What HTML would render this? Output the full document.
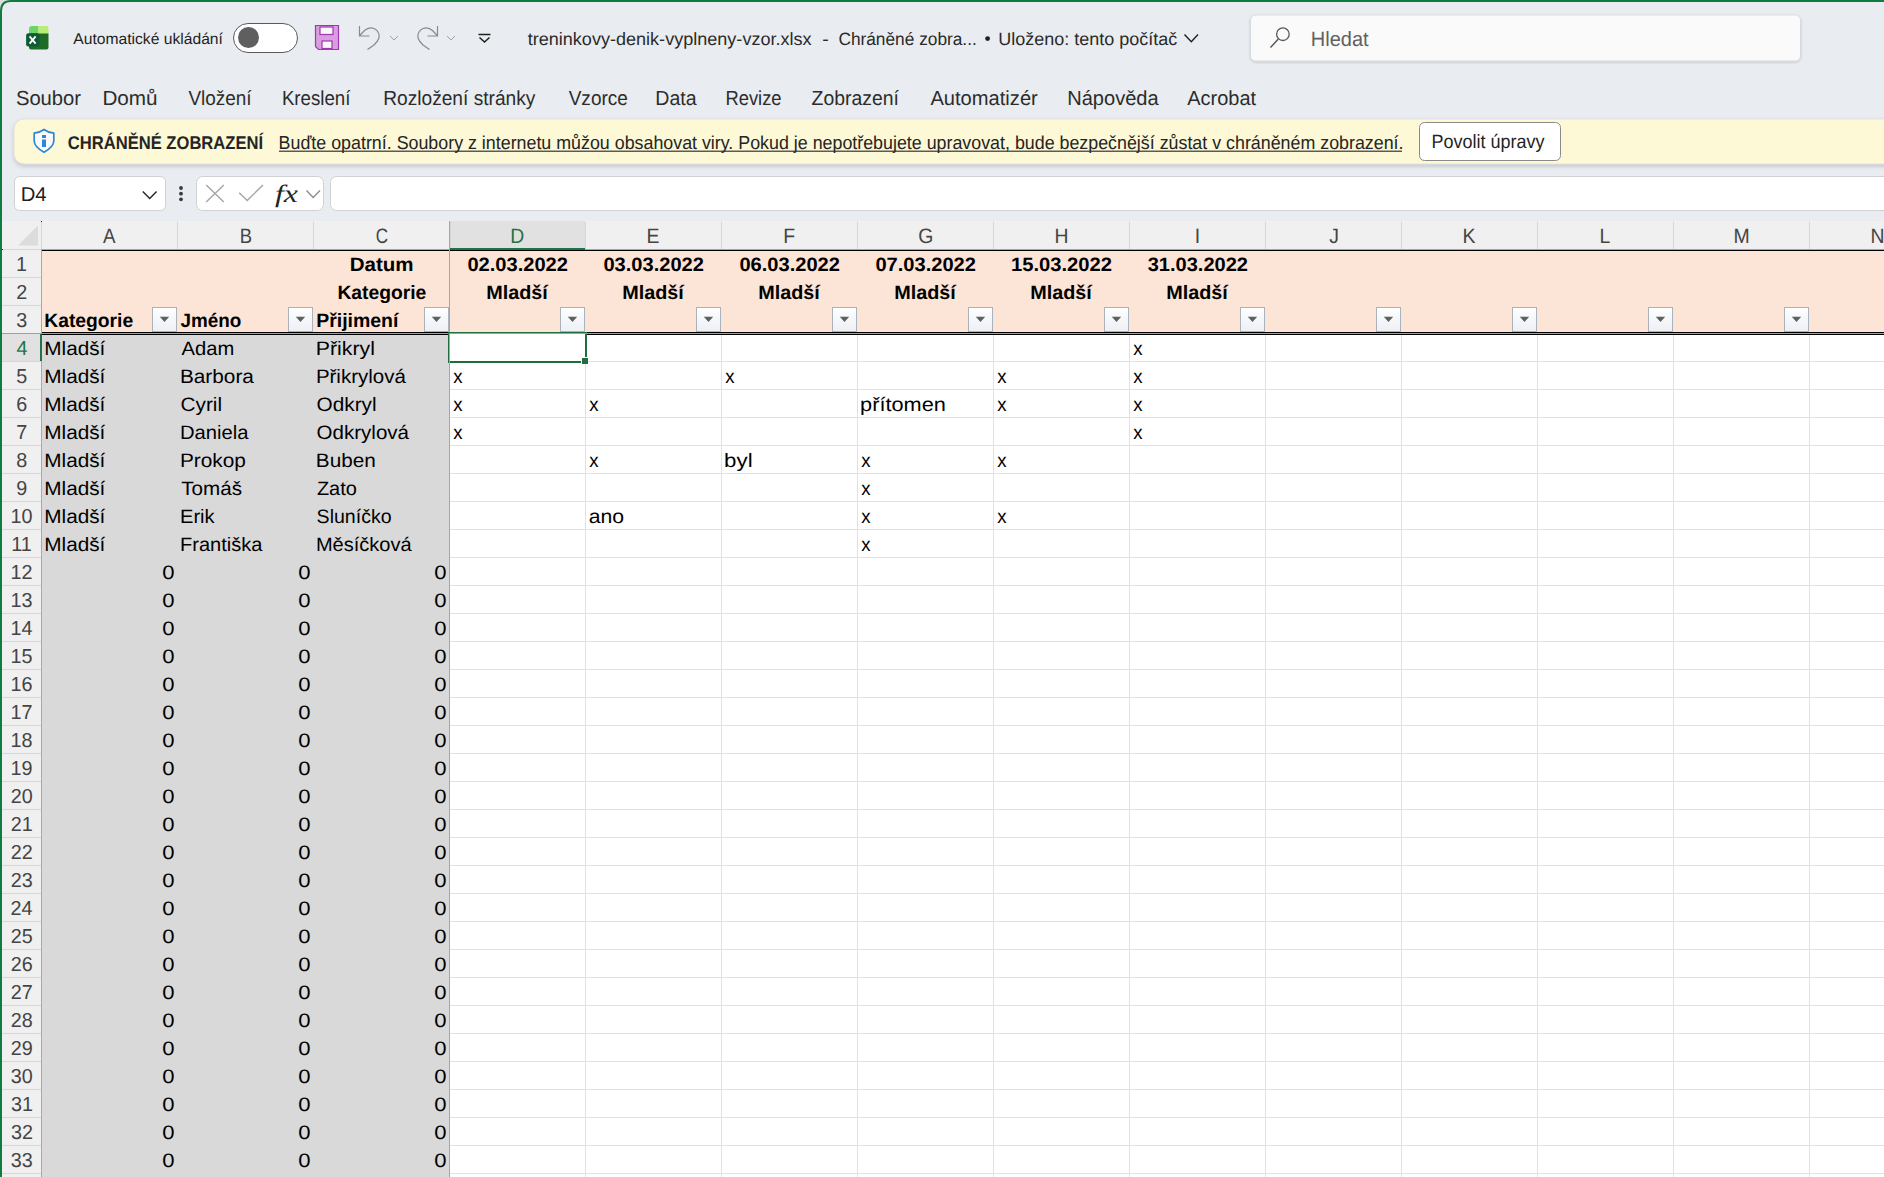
<!DOCTYPE html>
<html><head><meta charset="utf-8"><title>Excel</title>
<style>html,body{margin:0;padding:0;overflow:hidden;background:#e9edf1}svg{display:block}text{font-family:"Liberation Sans", sans-serif}</style>
</head><body>
<svg width="1884" height="1177" viewBox="0 0 1884 1177" text-rendering="geometricPrecision">
<defs><filter id="sh" x="-5%" y="-30%" width="110%" height="160%"><feDropShadow dx="0" dy="2" stdDeviation="2" flood-color="#000" flood-opacity="0.18"/></filter><filter id="sh2" x="-5%" y="-30%" width="110%" height="160%"><feDropShadow dx="0" dy="1" stdDeviation="1" flood-color="#000" flood-opacity="0.18"/></filter><linearGradient id="btn" x1="0" y1="0" x2="0" y2="1"><stop offset="0" stop-color="#ffffff"/><stop offset="0.5" stop-color="#f5f7fa"/><stop offset="1" stop-color="#edf0f4"/></linearGradient></defs>
<rect x="0" y="0" width="1884" height="1177" fill="#e9edf1"/>
<path d="M0,0 L13,0 Q0,0 0,13 Z" fill="#dcdcdc"/>
<path d="M1,1177 L1,11 Q1,1 11,1 L1884,1" fill="none" stroke="#107c41" stroke-width="2"/>
<g><path d="M29,29 Q29,26 32,26 L38.5,26 L38.5,34 L29,34 Z" fill="#6fd466"/><path d="M38.3,26 L46.5,26 Q48.5,26 48.5,28 L48.5,34 L38.3,34 Z" fill="#bdec74"/><path d="M29,33.5 L48.5,33.5 L48.5,47.5 Q48.5,49.6 46.5,49.6 L31,49.6 Q29,49.6 29,47.5 Z" fill="#1f6b26"/><rect x="26.1" y="33.3" width="13.5" height="13.2" rx="2.2" fill="#0e5a35"/><path d="M29.6,36.4 L35.6,43.6 M35.6,36.4 L29.6,43.6" stroke="#fff" stroke-width="1.9"/></g>
<text x="73.3" y="43.8" font-size="15.5" fill="#1f1f1f" font-weight="normal" textLength="149.6" lengthAdjust="spacingAndGlyphs">Automatické ukládání</text>
<rect x="233.5" y="23.5" width="64" height="29" rx="14.5" fill="#fff" stroke="#5a5a5a" stroke-width="1"/>
<circle cx="248.5" cy="37.5" r="10.5" fill="#5f5f5f"/>
<path d="M315.5,25.5 L338.5,25.5 L338.5,49.5 L318.5,49.5 L315.5,46.5 Z" fill="#d89ee0" stroke="#a335b3" stroke-width="1.2"/>
<rect x="320" y="27" width="13" height="7.5" fill="#f7f7f7" stroke="#a335b3" stroke-width="1.2"/>
<rect x="322" y="41" width="10" height="7.5" fill="#f7f7f7" stroke="#a335b3" stroke-width="1.2"/>
<path d="M359.5,26 L359.5,36 L369.5,36 M359.8,35.5 L364.5,30.5 Q369,26.5 374,28.5 Q380,31.5 379,38 Q378,41 374,45 L367.5,49.5" fill="none" stroke="#8a8a8a" stroke-width="1.2"/>
<path d="M390,36 L394,40 L398,36" fill="none" stroke="#a0a0a0" stroke-width="1"/>
<path d="M437.5,26 L437.5,36 L427.5,36 M437.2,35.5 L432.5,30.5 Q428,26.5 423,28.5 Q417,31.5 418,38 Q419,41 423,45 L429.5,49.5" fill="none" stroke="#8a8a8a" stroke-width="1.2"/>
<path d="M447,36 L451,40 L455,36" fill="none" stroke="#a0a0a0" stroke-width="1"/>
<path d="M478.5,34.5 L490.5,34.5" stroke="#1f1f1f" stroke-width="1.5"/>
<path d="M479.5,37.5 L484.5,42 L489.5,37.5" fill="none" stroke="#1f1f1f" stroke-width="1.5"/>
<text x="527.7" y="44.6" font-size="17.8" fill="#2a2a2a" font-weight="normal" textLength="283.9" lengthAdjust="spacingAndGlyphs">treninkovy-denik-vyplneny-vzor.xlsx</text>
<text x="822.3" y="44.6" font-size="17.8" fill="#2a2a2a" font-weight="normal" textLength="6.5" lengthAdjust="spacingAndGlyphs">-</text>
<text x="838.4" y="44.6" font-size="17.8" fill="#2a2a2a" font-weight="normal" textLength="138.4" lengthAdjust="spacingAndGlyphs">Chráněné zobra...</text>
<circle cx="987.6" cy="38.6" r="2.4" fill="#1f1f1f"/>
<text x="998.2" y="44.6" font-size="17.8" fill="#2a2a2a" font-weight="normal" textLength="179.1" lengthAdjust="spacingAndGlyphs">Uloženo: tento počítač</text>
<path d="M1184.5,34.5 L1191.3,41.8 L1198,34.5" fill="none" stroke="#1f1f1f" stroke-width="1.4"/>
<rect x="1250.5" y="15" width="550" height="46" rx="5" fill="#fafafa" stroke="#d8dbdf" stroke-width="1" filter="url(#sh2)"/>
<circle cx="1282.9" cy="34.2" r="6.3" fill="none" stroke="#585858" stroke-width="1.3"/>
<path d="M1278.3,39.1 L1270.5,47.5" stroke="#585858" stroke-width="1.5"/>
<text x="1310.8" y="45.9" font-size="20.7" fill="#616161" font-weight="normal" textLength="57.8" lengthAdjust="spacingAndGlyphs">Hledat</text>
<text x="15.9" y="104.9" font-size="20.3" fill="#2c2c2c" font-weight="normal" textLength="65.2" lengthAdjust="spacingAndGlyphs">Soubor</text>
<text x="102.4" y="104.9" font-size="20.3" fill="#2c2c2c" font-weight="normal" textLength="55.2" lengthAdjust="spacingAndGlyphs">Domů</text>
<text x="188.4" y="104.9" font-size="20.3" fill="#2c2c2c" font-weight="normal" textLength="63.2" lengthAdjust="spacingAndGlyphs">Vložení</text>
<text x="281.9" y="104.9" font-size="20.3" fill="#2c2c2c" font-weight="normal" textLength="68.5" lengthAdjust="spacingAndGlyphs">Kreslení</text>
<text x="383.2" y="104.9" font-size="20.3" fill="#2c2c2c" font-weight="normal" textLength="152.2" lengthAdjust="spacingAndGlyphs">Rozložení stránky</text>
<text x="568.7" y="104.9" font-size="20.3" fill="#2c2c2c" font-weight="normal" textLength="59.2" lengthAdjust="spacingAndGlyphs">Vzorce</text>
<text x="655.3" y="104.9" font-size="20.3" fill="#2c2c2c" font-weight="normal" textLength="41.3" lengthAdjust="spacingAndGlyphs">Data</text>
<text x="725.5" y="104.9" font-size="20.3" fill="#2c2c2c" font-weight="normal" textLength="56.0" lengthAdjust="spacingAndGlyphs">Revize</text>
<text x="811.6" y="104.9" font-size="20.3" fill="#2c2c2c" font-weight="normal" textLength="87.3" lengthAdjust="spacingAndGlyphs">Zobrazení</text>
<text x="930.4" y="104.9" font-size="20.3" fill="#2c2c2c" font-weight="normal" textLength="107.4" lengthAdjust="spacingAndGlyphs">Automatizér</text>
<text x="1067.2" y="104.9" font-size="20.3" fill="#2c2c2c" font-weight="normal" textLength="91.5" lengthAdjust="spacingAndGlyphs">Nápověda</text>
<text x="1187.3" y="104.9" font-size="20.3" fill="#2c2c2c" font-weight="normal" textLength="68.8" lengthAdjust="spacingAndGlyphs">Acrobat</text>
<rect x="14" y="119" width="1900" height="45" rx="10" fill="#fdf8d5" stroke="#d3d6da" stroke-width="0.6" filter="url(#sh)"/>
<path d="M44,129.5 Q39.5,132.8 34.2,133.2 L34.2,141 Q34.5,147 44,152.3 Q53.5,147 53.8,141 L53.8,133.2 Q48.5,132.8 44,129.5 Z" fill="#fafafa" stroke="#2b88d8" stroke-width="1.7"/>
<rect x="42" y="135" width="4" height="3" fill="#2b88d8"/>
<rect x="42" y="139.5" width="4" height="7.5" fill="#2b88d8"/>
<text x="67.8" y="149.0" font-size="18.4" fill="#242424" font-weight="bold" textLength="195.3" lengthAdjust="spacingAndGlyphs">CHRÁNĚNÉ ZOBRAZENÍ</text>
<text x="278.6" y="148.6" font-size="18.8" fill="#242424" font-weight="normal" textLength="1124.9" lengthAdjust="spacingAndGlyphs">Buďte opatrní. Soubory z internetu můžou obsahovat viry. Pokud je nepotřebujete upravovat, bude bezpečnější zůstat v chráněném zobrazení.</text>
<rect x="279" y="150.6" width="1123" height="1.2" fill="#333"/>
<rect x="1419.5" y="122.5" width="141" height="38" rx="5" fill="#fff" stroke="#8a8a8a" stroke-width="1"/>
<text x="1431.6" y="148.1" font-size="19.3" fill="#242424" font-weight="normal" textLength="113.0" lengthAdjust="spacingAndGlyphs">Povolit úpravy</text>
<rect x="14.5" y="176.5" width="151" height="34" rx="5" fill="#fff" stroke="#d1d1d1" stroke-width="1"/>
<text x="20.7" y="201.0" font-size="20.0" fill="#1f1f1f" font-weight="normal" textLength="25.9" lengthAdjust="spacingAndGlyphs">D4</text>
<path d="M142.8,191.5 L149.7,198.5 L156.6,191.5" fill="none" stroke="#242424" stroke-width="1.4"/>
<circle cx="181" cy="188" r="1.9" fill="#3a3a3a"/>
<circle cx="181" cy="193.7" r="1.9" fill="#3a3a3a"/>
<circle cx="181" cy="199.3" r="1.9" fill="#3a3a3a"/>
<rect x="196.5" y="176.5" width="127" height="34" rx="6" fill="#fff" stroke="#d1d1d1" stroke-width="1"/>
<path d="M206.2,185 L223.8,202 M223.8,185 L206.2,202" stroke="#a5a5a5" stroke-width="1.4"/>
<path d="M239.2,192.8 L247.2,200.5 L263,185" fill="none" stroke="#a5a5a5" stroke-width="1.4"/>
<text x="275" y="201.5" style="font-family:'Liberation Serif', serif;font-style:italic" font-size="25" fill="#242424" textLength="23" lengthAdjust="spacingAndGlyphs">fx</text>
<path d="M306.5,190.5 L313.2,197.5 L320,190.5" fill="none" stroke="#8a8a8a" stroke-width="1.3"/>
<rect x="330.5" y="176.5" width="1600" height="34" rx="6" fill="#fff" stroke="#d1d1d1" stroke-width="1"/>
<rect x="2" y="221" width="1882" height="956" fill="#ffffff"/>
<rect x="2" y="221" width="1882" height="28" fill="#f0f0f0"/>
<rect x="2" y="249" width="39" height="928" fill="#f0f0f0"/>
<path d="M18,245.5 L38,245.5 L38,225.5 Z" fill="#dcdcdc"/>
<rect x="450" y="221" width="135" height="28" fill="#e1e1e1"/>
<rect x="450" y="248" width="135" height="2" fill="#217346"/>
<rect x="2" y="334" width="38" height="27" fill="#e1e1e1"/>
<rect x="42" y="250" width="1842" height="83" fill="#fce4d6"/>
<rect x="42" y="335" width="407" height="842" fill="#d9d9d9"/>
<rect x="585" y="335" width="1" height="842" fill="#e1e1e1"/>
<rect x="721" y="335" width="1" height="842" fill="#e1e1e1"/>
<rect x="857" y="335" width="1" height="842" fill="#e1e1e1"/>
<rect x="993" y="335" width="1" height="842" fill="#e1e1e1"/>
<rect x="1129" y="335" width="1" height="842" fill="#e1e1e1"/>
<rect x="1265" y="335" width="1" height="842" fill="#e1e1e1"/>
<rect x="1401" y="335" width="1" height="842" fill="#e1e1e1"/>
<rect x="1537" y="335" width="1" height="842" fill="#e1e1e1"/>
<rect x="1673" y="335" width="1" height="842" fill="#e1e1e1"/>
<rect x="1809" y="335" width="1" height="842" fill="#e1e1e1"/>
<rect x="1945" y="335" width="1" height="842" fill="#e1e1e1"/>
<rect x="2081" y="335" width="1" height="842" fill="#e1e1e1"/>
<rect x="450" y="361" width="1434" height="1" fill="#e1e1e1"/>
<rect x="450" y="389" width="1434" height="1" fill="#e1e1e1"/>
<rect x="450" y="417" width="1434" height="1" fill="#e1e1e1"/>
<rect x="450" y="445" width="1434" height="1" fill="#e1e1e1"/>
<rect x="450" y="473" width="1434" height="1" fill="#e1e1e1"/>
<rect x="450" y="501" width="1434" height="1" fill="#e1e1e1"/>
<rect x="450" y="529" width="1434" height="1" fill="#e1e1e1"/>
<rect x="450" y="557" width="1434" height="1" fill="#e1e1e1"/>
<rect x="450" y="585" width="1434" height="1" fill="#e1e1e1"/>
<rect x="450" y="613" width="1434" height="1" fill="#e1e1e1"/>
<rect x="450" y="641" width="1434" height="1" fill="#e1e1e1"/>
<rect x="450" y="669" width="1434" height="1" fill="#e1e1e1"/>
<rect x="450" y="697" width="1434" height="1" fill="#e1e1e1"/>
<rect x="450" y="725" width="1434" height="1" fill="#e1e1e1"/>
<rect x="450" y="753" width="1434" height="1" fill="#e1e1e1"/>
<rect x="450" y="781" width="1434" height="1" fill="#e1e1e1"/>
<rect x="450" y="809" width="1434" height="1" fill="#e1e1e1"/>
<rect x="450" y="837" width="1434" height="1" fill="#e1e1e1"/>
<rect x="450" y="865" width="1434" height="1" fill="#e1e1e1"/>
<rect x="450" y="893" width="1434" height="1" fill="#e1e1e1"/>
<rect x="450" y="921" width="1434" height="1" fill="#e1e1e1"/>
<rect x="450" y="949" width="1434" height="1" fill="#e1e1e1"/>
<rect x="450" y="977" width="1434" height="1" fill="#e1e1e1"/>
<rect x="450" y="1005" width="1434" height="1" fill="#e1e1e1"/>
<rect x="450" y="1033" width="1434" height="1" fill="#e1e1e1"/>
<rect x="450" y="1061" width="1434" height="1" fill="#e1e1e1"/>
<rect x="450" y="1089" width="1434" height="1" fill="#e1e1e1"/>
<rect x="450" y="1117" width="1434" height="1" fill="#e1e1e1"/>
<rect x="450" y="1145" width="1434" height="1" fill="#e1e1e1"/>
<rect x="450" y="1173" width="1434" height="1" fill="#e1e1e1"/>
<rect x="450" y="1201" width="1434" height="1" fill="#e1e1e1"/>
<rect x="177" y="222" width="1" height="27" fill="#d6d6d6"/>
<rect x="313" y="222" width="1" height="27" fill="#d6d6d6"/>
<rect x="449" y="222" width="1" height="27" fill="#d6d6d6"/>
<rect x="585" y="222" width="1" height="27" fill="#d6d6d6"/>
<rect x="721" y="222" width="1" height="27" fill="#d6d6d6"/>
<rect x="857" y="222" width="1" height="27" fill="#d6d6d6"/>
<rect x="993" y="222" width="1" height="27" fill="#d6d6d6"/>
<rect x="1129" y="222" width="1" height="27" fill="#d6d6d6"/>
<rect x="1265" y="222" width="1" height="27" fill="#d6d6d6"/>
<rect x="1401" y="222" width="1" height="27" fill="#d6d6d6"/>
<rect x="1537" y="222" width="1" height="27" fill="#d6d6d6"/>
<rect x="1673" y="222" width="1" height="27" fill="#d6d6d6"/>
<rect x="1809" y="222" width="1" height="27" fill="#d6d6d6"/>
<rect x="1945" y="222" width="1" height="27" fill="#d6d6d6"/>
<rect x="41" y="222" width="1" height="27" fill="#d6d6d6"/>
<rect x="2" y="277" width="39" height="1" fill="#d6d6d6"/>
<rect x="2" y="305" width="39" height="1" fill="#d6d6d6"/>
<rect x="2" y="333" width="39" height="1" fill="#d6d6d6"/>
<rect x="2" y="361" width="39" height="1" fill="#d6d6d6"/>
<rect x="2" y="389" width="39" height="1" fill="#d6d6d6"/>
<rect x="2" y="417" width="39" height="1" fill="#d6d6d6"/>
<rect x="2" y="445" width="39" height="1" fill="#d6d6d6"/>
<rect x="2" y="473" width="39" height="1" fill="#d6d6d6"/>
<rect x="2" y="501" width="39" height="1" fill="#d6d6d6"/>
<rect x="2" y="529" width="39" height="1" fill="#d6d6d6"/>
<rect x="2" y="557" width="39" height="1" fill="#d6d6d6"/>
<rect x="2" y="585" width="39" height="1" fill="#d6d6d6"/>
<rect x="2" y="613" width="39" height="1" fill="#d6d6d6"/>
<rect x="2" y="641" width="39" height="1" fill="#d6d6d6"/>
<rect x="2" y="669" width="39" height="1" fill="#d6d6d6"/>
<rect x="2" y="697" width="39" height="1" fill="#d6d6d6"/>
<rect x="2" y="725" width="39" height="1" fill="#d6d6d6"/>
<rect x="2" y="753" width="39" height="1" fill="#d6d6d6"/>
<rect x="2" y="781" width="39" height="1" fill="#d6d6d6"/>
<rect x="2" y="809" width="39" height="1" fill="#d6d6d6"/>
<rect x="2" y="837" width="39" height="1" fill="#d6d6d6"/>
<rect x="2" y="865" width="39" height="1" fill="#d6d6d6"/>
<rect x="2" y="893" width="39" height="1" fill="#d6d6d6"/>
<rect x="2" y="921" width="39" height="1" fill="#d6d6d6"/>
<rect x="2" y="949" width="39" height="1" fill="#d6d6d6"/>
<rect x="2" y="977" width="39" height="1" fill="#d6d6d6"/>
<rect x="2" y="1005" width="39" height="1" fill="#d6d6d6"/>
<rect x="2" y="1033" width="39" height="1" fill="#d6d6d6"/>
<rect x="2" y="1061" width="39" height="1" fill="#d6d6d6"/>
<rect x="2" y="1089" width="39" height="1" fill="#d6d6d6"/>
<rect x="2" y="1117" width="39" height="1" fill="#d6d6d6"/>
<rect x="2" y="1145" width="39" height="1" fill="#d6d6d6"/>
<rect x="2" y="1173" width="39" height="1" fill="#d6d6d6"/>
<rect x="2" y="1201" width="39" height="1" fill="#d6d6d6"/>
<rect x="2" y="249" width="39" height="1" fill="#d6d6d6"/>
<rect x="41" y="249" width="1" height="928" fill="#a8a8a8"/>
<rect x="42" y="249" width="1842" height="1" fill="#a6a6a6"/>
<rect x="42" y="250" width="1842" height="1" fill="#000"/>
<rect x="42" y="332" width="1842" height="1" fill="#000"/>
<rect x="2" y="333" width="1882" height="1" fill="#a0a0a0"/>
<rect x="42" y="334" width="1842" height="1" fill="#000"/>
<rect x="449" y="221" width="1" height="956" fill="#a6a6a6"/>
<rect x="450" y="221" width="1" height="28" fill="#d6d6d6"/>
<rect x="40" y="334" width="2" height="27" fill="#217346"/>
<rect x="450" y="248" width="135" height="2" fill="#217346"/>
<text x="103.1" y="243.3" font-size="20.9" fill="#444444" font-weight="normal" textLength="12.5" lengthAdjust="spacingAndGlyphs">A</text>
<text x="239.7" y="243.3" font-size="20.9" fill="#444444" font-weight="normal" textLength="12.3" lengthAdjust="spacingAndGlyphs">B</text>
<text x="375.7" y="243.3" font-size="20.9" fill="#444444" font-weight="normal" textLength="12.3" lengthAdjust="spacingAndGlyphs">C</text>
<text x="510.2" y="243.3" font-size="20.9" fill="#217346" font-weight="normal" textLength="14.0" lengthAdjust="spacingAndGlyphs">D</text>
<text x="646.6" y="243.3" font-size="20.9" fill="#444444" font-weight="normal" textLength="13.0" lengthAdjust="spacingAndGlyphs">E</text>
<text x="783.2" y="243.3" font-size="20.9" fill="#444444" font-weight="normal" textLength="11.9" lengthAdjust="spacingAndGlyphs">F</text>
<text x="918.2" y="243.3" font-size="20.9" fill="#444444" font-weight="normal" textLength="15.1" lengthAdjust="spacingAndGlyphs">G</text>
<text x="1054.5" y="243.3" font-size="20.9" fill="#444444" font-weight="normal" textLength="14.0" lengthAdjust="spacingAndGlyphs">H</text>
<text x="1194.8" y="243.3" font-size="20.9" fill="#444444" font-weight="normal" textLength="5.4" lengthAdjust="spacingAndGlyphs">I</text>
<text x="1329.2" y="243.3" font-size="20.9" fill="#444444" font-weight="normal" textLength="9.7" lengthAdjust="spacingAndGlyphs">J</text>
<text x="1462.4" y="243.3" font-size="20.9" fill="#444444" font-weight="normal" textLength="13.0" lengthAdjust="spacingAndGlyphs">K</text>
<text x="1599.6" y="243.3" font-size="20.9" fill="#444444" font-weight="normal" textLength="10.8" lengthAdjust="spacingAndGlyphs">L</text>
<text x="1733.4" y="243.3" font-size="20.9" fill="#444444" font-weight="normal" textLength="16.2" lengthAdjust="spacingAndGlyphs">M</text>
<text x="1870.5" y="243.3" font-size="20.9" fill="#444444" font-weight="normal" textLength="14.0" lengthAdjust="spacingAndGlyphs">N</text>
<text x="16.0" y="271.0" font-size="20.2" fill="#444444" font-weight="normal" textLength="11.0" lengthAdjust="spacingAndGlyphs">1</text>
<text x="16.3" y="299.0" font-size="20.2" fill="#444444" font-weight="normal" textLength="11.0" lengthAdjust="spacingAndGlyphs">2</text>
<text x="16.3" y="327.0" font-size="20.2" fill="#444444" font-weight="normal" textLength="11.0" lengthAdjust="spacingAndGlyphs">3</text>
<text x="16.4" y="355.0" font-size="20.2" fill="#217346" font-weight="normal" textLength="11.0" lengthAdjust="spacingAndGlyphs">4</text>
<text x="16.3" y="383.0" font-size="20.2" fill="#444444" font-weight="normal" textLength="11.0" lengthAdjust="spacingAndGlyphs">5</text>
<text x="16.2" y="411.0" font-size="20.2" fill="#444444" font-weight="normal" textLength="11.0" lengthAdjust="spacingAndGlyphs">6</text>
<text x="16.3" y="439.0" font-size="20.2" fill="#444444" font-weight="normal" textLength="11.0" lengthAdjust="spacingAndGlyphs">7</text>
<text x="16.3" y="467.0" font-size="20.2" fill="#444444" font-weight="normal" textLength="11.0" lengthAdjust="spacingAndGlyphs">8</text>
<text x="16.3" y="495.0" font-size="20.2" fill="#444444" font-weight="normal" textLength="11.0" lengthAdjust="spacingAndGlyphs">9</text>
<text x="10.4" y="523.0" font-size="20.2" fill="#444444" font-weight="normal" textLength="22.0" lengthAdjust="spacingAndGlyphs">10</text>
<text x="11.3" y="551.0" font-size="20.2" fill="#444444" font-weight="normal" textLength="20.6" lengthAdjust="spacingAndGlyphs">11</text>
<text x="10.6" y="579.0" font-size="20.2" fill="#444444" font-weight="normal" textLength="22.0" lengthAdjust="spacingAndGlyphs">12</text>
<text x="10.5" y="607.0" font-size="20.2" fill="#444444" font-weight="normal" textLength="22.0" lengthAdjust="spacingAndGlyphs">13</text>
<text x="10.4" y="635.0" font-size="20.2" fill="#444444" font-weight="normal" textLength="22.0" lengthAdjust="spacingAndGlyphs">14</text>
<text x="10.5" y="663.0" font-size="20.2" fill="#444444" font-weight="normal" textLength="22.0" lengthAdjust="spacingAndGlyphs">15</text>
<text x="10.5" y="691.0" font-size="20.2" fill="#444444" font-weight="normal" textLength="22.0" lengthAdjust="spacingAndGlyphs">16</text>
<text x="10.6" y="719.0" font-size="20.2" fill="#444444" font-weight="normal" textLength="22.0" lengthAdjust="spacingAndGlyphs">17</text>
<text x="10.5" y="747.0" font-size="20.2" fill="#444444" font-weight="normal" textLength="22.0" lengthAdjust="spacingAndGlyphs">18</text>
<text x="10.5" y="775.0" font-size="20.2" fill="#444444" font-weight="normal" textLength="22.0" lengthAdjust="spacingAndGlyphs">19</text>
<text x="10.7" y="803.0" font-size="20.2" fill="#444444" font-weight="normal" textLength="22.0" lengthAdjust="spacingAndGlyphs">20</text>
<text x="10.8" y="831.0" font-size="20.2" fill="#444444" font-weight="normal" textLength="22.0" lengthAdjust="spacingAndGlyphs">21</text>
<text x="10.8" y="859.0" font-size="20.2" fill="#444444" font-weight="normal" textLength="22.0" lengthAdjust="spacingAndGlyphs">22</text>
<text x="10.7" y="887.0" font-size="20.2" fill="#444444" font-weight="normal" textLength="22.0" lengthAdjust="spacingAndGlyphs">23</text>
<text x="10.6" y="915.0" font-size="20.2" fill="#444444" font-weight="normal" textLength="22.0" lengthAdjust="spacingAndGlyphs">24</text>
<text x="10.7" y="943.0" font-size="20.2" fill="#444444" font-weight="normal" textLength="22.0" lengthAdjust="spacingAndGlyphs">25</text>
<text x="10.7" y="971.0" font-size="20.2" fill="#444444" font-weight="normal" textLength="22.0" lengthAdjust="spacingAndGlyphs">26</text>
<text x="10.8" y="999.0" font-size="20.2" fill="#444444" font-weight="normal" textLength="22.0" lengthAdjust="spacingAndGlyphs">27</text>
<text x="10.7" y="1027.0" font-size="20.2" fill="#444444" font-weight="normal" textLength="22.0" lengthAdjust="spacingAndGlyphs">28</text>
<text x="10.8" y="1055.0" font-size="20.2" fill="#444444" font-weight="normal" textLength="22.0" lengthAdjust="spacingAndGlyphs">29</text>
<text x="10.8" y="1083.0" font-size="20.2" fill="#444444" font-weight="normal" textLength="22.0" lengthAdjust="spacingAndGlyphs">30</text>
<text x="10.9" y="1111.0" font-size="20.2" fill="#444444" font-weight="normal" textLength="22.0" lengthAdjust="spacingAndGlyphs">31</text>
<text x="10.9" y="1139.0" font-size="20.2" fill="#444444" font-weight="normal" textLength="22.0" lengthAdjust="spacingAndGlyphs">32</text>
<text x="10.8" y="1167.0" font-size="20.2" fill="#444444" font-weight="normal" textLength="22.0" lengthAdjust="spacingAndGlyphs">33</text>
<text x="349.7" y="271.0" font-size="19.4" fill="#000000" font-weight="bold" textLength="63.9" lengthAdjust="spacingAndGlyphs">Datum</text>
<text x="337.4" y="299.0" font-size="19.4" fill="#000000" font-weight="bold" textLength="88.9" lengthAdjust="spacingAndGlyphs">Kategorie</text>
<text x="44.3" y="327.0" font-size="19.4" fill="#000000" font-weight="bold" textLength="88.9" lengthAdjust="spacingAndGlyphs">Kategorie</text>
<text x="180.6" y="327.0" font-size="19.4" fill="#000000" font-weight="bold" textLength="60.8" lengthAdjust="spacingAndGlyphs">Jméno</text>
<text x="316.2" y="327.0" font-size="19.4" fill="#000000" font-weight="bold" textLength="82.2" lengthAdjust="spacingAndGlyphs">Přijimení</text>
<text x="467.4" y="271.0" font-size="19.4" fill="#000000" font-weight="bold" textLength="100.6" lengthAdjust="spacingAndGlyphs">02.03.2022</text>
<text x="486.2" y="299.0" font-size="19.4" fill="#000000" font-weight="bold" textLength="61.6" lengthAdjust="spacingAndGlyphs">Mladší</text>
<text x="603.4" y="271.0" font-size="19.4" fill="#000000" font-weight="bold" textLength="100.6" lengthAdjust="spacingAndGlyphs">03.03.2022</text>
<text x="622.2" y="299.0" font-size="19.4" fill="#000000" font-weight="bold" textLength="61.6" lengthAdjust="spacingAndGlyphs">Mladší</text>
<text x="739.4" y="271.0" font-size="19.4" fill="#000000" font-weight="bold" textLength="100.6" lengthAdjust="spacingAndGlyphs">06.03.2022</text>
<text x="758.2" y="299.0" font-size="19.4" fill="#000000" font-weight="bold" textLength="61.6" lengthAdjust="spacingAndGlyphs">Mladší</text>
<text x="875.4" y="271.0" font-size="19.4" fill="#000000" font-weight="bold" textLength="100.6" lengthAdjust="spacingAndGlyphs">07.03.2022</text>
<text x="894.2" y="299.0" font-size="19.4" fill="#000000" font-weight="bold" textLength="61.6" lengthAdjust="spacingAndGlyphs">Mladší</text>
<text x="1011.0" y="271.0" font-size="19.4" fill="#000000" font-weight="bold" textLength="101.0" lengthAdjust="spacingAndGlyphs">15.03.2022</text>
<text x="1030.2" y="299.0" font-size="19.4" fill="#000000" font-weight="bold" textLength="61.6" lengthAdjust="spacingAndGlyphs">Mladší</text>
<text x="1147.7" y="271.0" font-size="19.4" fill="#000000" font-weight="bold" textLength="100.3" lengthAdjust="spacingAndGlyphs">31.03.2022</text>
<text x="1166.2" y="299.0" font-size="19.4" fill="#000000" font-weight="bold" textLength="61.6" lengthAdjust="spacingAndGlyphs">Mladší</text>
<rect x="152.5" y="307.5" width="24" height="24" fill="url(#btn)" stroke="#aab2bc" stroke-width="1"/>
<path d="M159.8,316.8 L169.2,316.8 L164.5,322 Z" fill="#606060"/>
<rect x="288.5" y="307.5" width="24" height="24" fill="url(#btn)" stroke="#aab2bc" stroke-width="1"/>
<path d="M295.8,316.8 L305.2,316.8 L300.5,322 Z" fill="#606060"/>
<rect x="424.5" y="307.5" width="24" height="24" fill="url(#btn)" stroke="#aab2bc" stroke-width="1"/>
<path d="M431.8,316.8 L441.2,316.8 L436.5,322 Z" fill="#606060"/>
<rect x="560.5" y="307.5" width="24" height="24" fill="url(#btn)" stroke="#aab2bc" stroke-width="1"/>
<path d="M567.8,316.8 L577.2,316.8 L572.5,322 Z" fill="#606060"/>
<rect x="696.5" y="307.5" width="24" height="24" fill="url(#btn)" stroke="#aab2bc" stroke-width="1"/>
<path d="M703.8,316.8 L713.2,316.8 L708.5,322 Z" fill="#606060"/>
<rect x="832.5" y="307.5" width="24" height="24" fill="url(#btn)" stroke="#aab2bc" stroke-width="1"/>
<path d="M839.8,316.8 L849.2,316.8 L844.5,322 Z" fill="#606060"/>
<rect x="968.5" y="307.5" width="24" height="24" fill="url(#btn)" stroke="#aab2bc" stroke-width="1"/>
<path d="M975.8,316.8 L985.2,316.8 L980.5,322 Z" fill="#606060"/>
<rect x="1104.5" y="307.5" width="24" height="24" fill="url(#btn)" stroke="#aab2bc" stroke-width="1"/>
<path d="M1111.8,316.8 L1121.2,316.8 L1116.5,322 Z" fill="#606060"/>
<rect x="1240.5" y="307.5" width="24" height="24" fill="url(#btn)" stroke="#aab2bc" stroke-width="1"/>
<path d="M1247.8,316.8 L1257.2,316.8 L1252.5,322 Z" fill="#606060"/>
<rect x="1376.5" y="307.5" width="24" height="24" fill="url(#btn)" stroke="#aab2bc" stroke-width="1"/>
<path d="M1383.8,316.8 L1393.2,316.8 L1388.5,322 Z" fill="#606060"/>
<rect x="1512.5" y="307.5" width="24" height="24" fill="url(#btn)" stroke="#aab2bc" stroke-width="1"/>
<path d="M1519.8,316.8 L1529.2,316.8 L1524.5,322 Z" fill="#606060"/>
<rect x="1648.5" y="307.5" width="24" height="24" fill="url(#btn)" stroke="#aab2bc" stroke-width="1"/>
<path d="M1655.8,316.8 L1665.2,316.8 L1660.5,322 Z" fill="#606060"/>
<rect x="1784.5" y="307.5" width="24" height="24" fill="url(#btn)" stroke="#aab2bc" stroke-width="1"/>
<path d="M1791.8,316.8 L1801.2,316.8 L1796.5,322 Z" fill="#606060"/>
<text x="44.3" y="355.0" font-size="19.4" fill="#000000" font-weight="normal" textLength="61.1" lengthAdjust="spacingAndGlyphs">Mladší</text>
<text x="181.6" y="355.0" font-size="19.4" fill="#000000" font-weight="normal" textLength="52.7" lengthAdjust="spacingAndGlyphs">Adam</text>
<text x="315.8" y="355.0" font-size="19.4" fill="#000000" font-weight="normal" textLength="59.1" lengthAdjust="spacingAndGlyphs">Přikryl</text>
<text x="44.3" y="383.0" font-size="19.4" fill="#000000" font-weight="normal" textLength="61.1" lengthAdjust="spacingAndGlyphs">Mladší</text>
<text x="179.9" y="383.0" font-size="19.4" fill="#000000" font-weight="normal" textLength="74.0" lengthAdjust="spacingAndGlyphs">Barbora</text>
<text x="315.9" y="383.0" font-size="19.4" fill="#000000" font-weight="normal" textLength="89.9" lengthAdjust="spacingAndGlyphs">Přikrylová</text>
<text x="44.3" y="411.0" font-size="19.4" fill="#000000" font-weight="normal" textLength="61.1" lengthAdjust="spacingAndGlyphs">Mladší</text>
<text x="180.6" y="411.0" font-size="19.4" fill="#000000" font-weight="normal" textLength="41.5" lengthAdjust="spacingAndGlyphs">Cyril</text>
<text x="316.6" y="411.0" font-size="19.4" fill="#000000" font-weight="normal" textLength="60.0" lengthAdjust="spacingAndGlyphs">Odkryl</text>
<text x="44.3" y="439.0" font-size="19.4" fill="#000000" font-weight="normal" textLength="61.1" lengthAdjust="spacingAndGlyphs">Mladší</text>
<text x="180.0" y="439.0" font-size="19.4" fill="#000000" font-weight="normal" textLength="68.5" lengthAdjust="spacingAndGlyphs">Daniela</text>
<text x="316.6" y="439.0" font-size="19.4" fill="#000000" font-weight="normal" textLength="92.4" lengthAdjust="spacingAndGlyphs">Odkrylová</text>
<text x="44.3" y="467.0" font-size="19.4" fill="#000000" font-weight="normal" textLength="61.1" lengthAdjust="spacingAndGlyphs">Mladší</text>
<text x="179.9" y="467.0" font-size="19.4" fill="#000000" font-weight="normal" textLength="66.0" lengthAdjust="spacingAndGlyphs">Prokop</text>
<text x="315.8" y="467.0" font-size="19.4" fill="#000000" font-weight="normal" textLength="60.0" lengthAdjust="spacingAndGlyphs">Buben</text>
<text x="44.3" y="495.0" font-size="19.4" fill="#000000" font-weight="normal" textLength="61.1" lengthAdjust="spacingAndGlyphs">Mladší</text>
<text x="181.2" y="495.0" font-size="19.4" fill="#000000" font-weight="normal" textLength="60.8" lengthAdjust="spacingAndGlyphs">Tomáš</text>
<text x="316.9" y="495.0" font-size="19.4" fill="#000000" font-weight="normal" textLength="39.9" lengthAdjust="spacingAndGlyphs">Zato</text>
<text x="44.3" y="523.0" font-size="19.4" fill="#000000" font-weight="normal" textLength="61.1" lengthAdjust="spacingAndGlyphs">Mladší</text>
<text x="180.0" y="523.0" font-size="19.4" fill="#000000" font-weight="normal" textLength="34.6" lengthAdjust="spacingAndGlyphs">Erik</text>
<text x="316.6" y="523.0" font-size="19.4" fill="#000000" font-weight="normal" textLength="75.0" lengthAdjust="spacingAndGlyphs">Sluníčko</text>
<text x="44.3" y="551.0" font-size="19.4" fill="#000000" font-weight="normal" textLength="61.1" lengthAdjust="spacingAndGlyphs">Mladší</text>
<text x="180.0" y="551.0" font-size="19.4" fill="#000000" font-weight="normal" textLength="82.5" lengthAdjust="spacingAndGlyphs">Františka</text>
<text x="315.9" y="551.0" font-size="19.4" fill="#000000" font-weight="normal" textLength="95.8" lengthAdjust="spacingAndGlyphs">Měsíčková</text>
<text x="162.3" y="579.0" font-size="19.4" fill="#000000" font-weight="normal" textLength="12.3" lengthAdjust="spacingAndGlyphs">0</text>
<text x="298.3" y="579.0" font-size="19.4" fill="#000000" font-weight="normal" textLength="12.3" lengthAdjust="spacingAndGlyphs">0</text>
<text x="434.3" y="579.0" font-size="19.4" fill="#000000" font-weight="normal" textLength="12.3" lengthAdjust="spacingAndGlyphs">0</text>
<text x="162.3" y="607.0" font-size="19.4" fill="#000000" font-weight="normal" textLength="12.3" lengthAdjust="spacingAndGlyphs">0</text>
<text x="298.3" y="607.0" font-size="19.4" fill="#000000" font-weight="normal" textLength="12.3" lengthAdjust="spacingAndGlyphs">0</text>
<text x="434.3" y="607.0" font-size="19.4" fill="#000000" font-weight="normal" textLength="12.3" lengthAdjust="spacingAndGlyphs">0</text>
<text x="162.3" y="635.0" font-size="19.4" fill="#000000" font-weight="normal" textLength="12.3" lengthAdjust="spacingAndGlyphs">0</text>
<text x="298.3" y="635.0" font-size="19.4" fill="#000000" font-weight="normal" textLength="12.3" lengthAdjust="spacingAndGlyphs">0</text>
<text x="434.3" y="635.0" font-size="19.4" fill="#000000" font-weight="normal" textLength="12.3" lengthAdjust="spacingAndGlyphs">0</text>
<text x="162.3" y="663.0" font-size="19.4" fill="#000000" font-weight="normal" textLength="12.3" lengthAdjust="spacingAndGlyphs">0</text>
<text x="298.3" y="663.0" font-size="19.4" fill="#000000" font-weight="normal" textLength="12.3" lengthAdjust="spacingAndGlyphs">0</text>
<text x="434.3" y="663.0" font-size="19.4" fill="#000000" font-weight="normal" textLength="12.3" lengthAdjust="spacingAndGlyphs">0</text>
<text x="162.3" y="691.0" font-size="19.4" fill="#000000" font-weight="normal" textLength="12.3" lengthAdjust="spacingAndGlyphs">0</text>
<text x="298.3" y="691.0" font-size="19.4" fill="#000000" font-weight="normal" textLength="12.3" lengthAdjust="spacingAndGlyphs">0</text>
<text x="434.3" y="691.0" font-size="19.4" fill="#000000" font-weight="normal" textLength="12.3" lengthAdjust="spacingAndGlyphs">0</text>
<text x="162.3" y="719.0" font-size="19.4" fill="#000000" font-weight="normal" textLength="12.3" lengthAdjust="spacingAndGlyphs">0</text>
<text x="298.3" y="719.0" font-size="19.4" fill="#000000" font-weight="normal" textLength="12.3" lengthAdjust="spacingAndGlyphs">0</text>
<text x="434.3" y="719.0" font-size="19.4" fill="#000000" font-weight="normal" textLength="12.3" lengthAdjust="spacingAndGlyphs">0</text>
<text x="162.3" y="747.0" font-size="19.4" fill="#000000" font-weight="normal" textLength="12.3" lengthAdjust="spacingAndGlyphs">0</text>
<text x="298.3" y="747.0" font-size="19.4" fill="#000000" font-weight="normal" textLength="12.3" lengthAdjust="spacingAndGlyphs">0</text>
<text x="434.3" y="747.0" font-size="19.4" fill="#000000" font-weight="normal" textLength="12.3" lengthAdjust="spacingAndGlyphs">0</text>
<text x="162.3" y="775.0" font-size="19.4" fill="#000000" font-weight="normal" textLength="12.3" lengthAdjust="spacingAndGlyphs">0</text>
<text x="298.3" y="775.0" font-size="19.4" fill="#000000" font-weight="normal" textLength="12.3" lengthAdjust="spacingAndGlyphs">0</text>
<text x="434.3" y="775.0" font-size="19.4" fill="#000000" font-weight="normal" textLength="12.3" lengthAdjust="spacingAndGlyphs">0</text>
<text x="162.3" y="803.0" font-size="19.4" fill="#000000" font-weight="normal" textLength="12.3" lengthAdjust="spacingAndGlyphs">0</text>
<text x="298.3" y="803.0" font-size="19.4" fill="#000000" font-weight="normal" textLength="12.3" lengthAdjust="spacingAndGlyphs">0</text>
<text x="434.3" y="803.0" font-size="19.4" fill="#000000" font-weight="normal" textLength="12.3" lengthAdjust="spacingAndGlyphs">0</text>
<text x="162.3" y="831.0" font-size="19.4" fill="#000000" font-weight="normal" textLength="12.3" lengthAdjust="spacingAndGlyphs">0</text>
<text x="298.3" y="831.0" font-size="19.4" fill="#000000" font-weight="normal" textLength="12.3" lengthAdjust="spacingAndGlyphs">0</text>
<text x="434.3" y="831.0" font-size="19.4" fill="#000000" font-weight="normal" textLength="12.3" lengthAdjust="spacingAndGlyphs">0</text>
<text x="162.3" y="859.0" font-size="19.4" fill="#000000" font-weight="normal" textLength="12.3" lengthAdjust="spacingAndGlyphs">0</text>
<text x="298.3" y="859.0" font-size="19.4" fill="#000000" font-weight="normal" textLength="12.3" lengthAdjust="spacingAndGlyphs">0</text>
<text x="434.3" y="859.0" font-size="19.4" fill="#000000" font-weight="normal" textLength="12.3" lengthAdjust="spacingAndGlyphs">0</text>
<text x="162.3" y="887.0" font-size="19.4" fill="#000000" font-weight="normal" textLength="12.3" lengthAdjust="spacingAndGlyphs">0</text>
<text x="298.3" y="887.0" font-size="19.4" fill="#000000" font-weight="normal" textLength="12.3" lengthAdjust="spacingAndGlyphs">0</text>
<text x="434.3" y="887.0" font-size="19.4" fill="#000000" font-weight="normal" textLength="12.3" lengthAdjust="spacingAndGlyphs">0</text>
<text x="162.3" y="915.0" font-size="19.4" fill="#000000" font-weight="normal" textLength="12.3" lengthAdjust="spacingAndGlyphs">0</text>
<text x="298.3" y="915.0" font-size="19.4" fill="#000000" font-weight="normal" textLength="12.3" lengthAdjust="spacingAndGlyphs">0</text>
<text x="434.3" y="915.0" font-size="19.4" fill="#000000" font-weight="normal" textLength="12.3" lengthAdjust="spacingAndGlyphs">0</text>
<text x="162.3" y="943.0" font-size="19.4" fill="#000000" font-weight="normal" textLength="12.3" lengthAdjust="spacingAndGlyphs">0</text>
<text x="298.3" y="943.0" font-size="19.4" fill="#000000" font-weight="normal" textLength="12.3" lengthAdjust="spacingAndGlyphs">0</text>
<text x="434.3" y="943.0" font-size="19.4" fill="#000000" font-weight="normal" textLength="12.3" lengthAdjust="spacingAndGlyphs">0</text>
<text x="162.3" y="971.0" font-size="19.4" fill="#000000" font-weight="normal" textLength="12.3" lengthAdjust="spacingAndGlyphs">0</text>
<text x="298.3" y="971.0" font-size="19.4" fill="#000000" font-weight="normal" textLength="12.3" lengthAdjust="spacingAndGlyphs">0</text>
<text x="434.3" y="971.0" font-size="19.4" fill="#000000" font-weight="normal" textLength="12.3" lengthAdjust="spacingAndGlyphs">0</text>
<text x="162.3" y="999.0" font-size="19.4" fill="#000000" font-weight="normal" textLength="12.3" lengthAdjust="spacingAndGlyphs">0</text>
<text x="298.3" y="999.0" font-size="19.4" fill="#000000" font-weight="normal" textLength="12.3" lengthAdjust="spacingAndGlyphs">0</text>
<text x="434.3" y="999.0" font-size="19.4" fill="#000000" font-weight="normal" textLength="12.3" lengthAdjust="spacingAndGlyphs">0</text>
<text x="162.3" y="1027.0" font-size="19.4" fill="#000000" font-weight="normal" textLength="12.3" lengthAdjust="spacingAndGlyphs">0</text>
<text x="298.3" y="1027.0" font-size="19.4" fill="#000000" font-weight="normal" textLength="12.3" lengthAdjust="spacingAndGlyphs">0</text>
<text x="434.3" y="1027.0" font-size="19.4" fill="#000000" font-weight="normal" textLength="12.3" lengthAdjust="spacingAndGlyphs">0</text>
<text x="162.3" y="1055.0" font-size="19.4" fill="#000000" font-weight="normal" textLength="12.3" lengthAdjust="spacingAndGlyphs">0</text>
<text x="298.3" y="1055.0" font-size="19.4" fill="#000000" font-weight="normal" textLength="12.3" lengthAdjust="spacingAndGlyphs">0</text>
<text x="434.3" y="1055.0" font-size="19.4" fill="#000000" font-weight="normal" textLength="12.3" lengthAdjust="spacingAndGlyphs">0</text>
<text x="162.3" y="1083.0" font-size="19.4" fill="#000000" font-weight="normal" textLength="12.3" lengthAdjust="spacingAndGlyphs">0</text>
<text x="298.3" y="1083.0" font-size="19.4" fill="#000000" font-weight="normal" textLength="12.3" lengthAdjust="spacingAndGlyphs">0</text>
<text x="434.3" y="1083.0" font-size="19.4" fill="#000000" font-weight="normal" textLength="12.3" lengthAdjust="spacingAndGlyphs">0</text>
<text x="162.3" y="1111.0" font-size="19.4" fill="#000000" font-weight="normal" textLength="12.3" lengthAdjust="spacingAndGlyphs">0</text>
<text x="298.3" y="1111.0" font-size="19.4" fill="#000000" font-weight="normal" textLength="12.3" lengthAdjust="spacingAndGlyphs">0</text>
<text x="434.3" y="1111.0" font-size="19.4" fill="#000000" font-weight="normal" textLength="12.3" lengthAdjust="spacingAndGlyphs">0</text>
<text x="162.3" y="1139.0" font-size="19.4" fill="#000000" font-weight="normal" textLength="12.3" lengthAdjust="spacingAndGlyphs">0</text>
<text x="298.3" y="1139.0" font-size="19.4" fill="#000000" font-weight="normal" textLength="12.3" lengthAdjust="spacingAndGlyphs">0</text>
<text x="434.3" y="1139.0" font-size="19.4" fill="#000000" font-weight="normal" textLength="12.3" lengthAdjust="spacingAndGlyphs">0</text>
<text x="162.3" y="1167.0" font-size="19.4" fill="#000000" font-weight="normal" textLength="12.3" lengthAdjust="spacingAndGlyphs">0</text>
<text x="298.3" y="1167.0" font-size="19.4" fill="#000000" font-weight="normal" textLength="12.3" lengthAdjust="spacingAndGlyphs">0</text>
<text x="434.3" y="1167.0" font-size="19.4" fill="#000000" font-weight="normal" textLength="12.3" lengthAdjust="spacingAndGlyphs">0</text>
<text x="1133.3" y="355.0" font-size="19.4" fill="#000000" font-weight="normal" textLength="9.3" lengthAdjust="spacingAndGlyphs">x</text>
<text x="453.3" y="383.0" font-size="19.4" fill="#000000" font-weight="normal" textLength="9.3" lengthAdjust="spacingAndGlyphs">x</text>
<text x="725.3" y="383.0" font-size="19.4" fill="#000000" font-weight="normal" textLength="9.3" lengthAdjust="spacingAndGlyphs">x</text>
<text x="997.3" y="383.0" font-size="19.4" fill="#000000" font-weight="normal" textLength="9.3" lengthAdjust="spacingAndGlyphs">x</text>
<text x="1133.3" y="383.0" font-size="19.4" fill="#000000" font-weight="normal" textLength="9.3" lengthAdjust="spacingAndGlyphs">x</text>
<text x="453.3" y="411.0" font-size="19.4" fill="#000000" font-weight="normal" textLength="9.3" lengthAdjust="spacingAndGlyphs">x</text>
<text x="589.3" y="411.0" font-size="19.4" fill="#000000" font-weight="normal" textLength="9.3" lengthAdjust="spacingAndGlyphs">x</text>
<text x="860.1" y="411.0" font-size="19.4" fill="#000000" font-weight="normal" textLength="85.7" lengthAdjust="spacingAndGlyphs">přítomen</text>
<text x="997.3" y="411.0" font-size="19.4" fill="#000000" font-weight="normal" textLength="9.3" lengthAdjust="spacingAndGlyphs">x</text>
<text x="1133.3" y="411.0" font-size="19.4" fill="#000000" font-weight="normal" textLength="9.3" lengthAdjust="spacingAndGlyphs">x</text>
<text x="453.3" y="439.0" font-size="19.4" fill="#000000" font-weight="normal" textLength="9.3" lengthAdjust="spacingAndGlyphs">x</text>
<text x="1133.3" y="439.0" font-size="19.4" fill="#000000" font-weight="normal" textLength="9.3" lengthAdjust="spacingAndGlyphs">x</text>
<text x="589.3" y="467.0" font-size="19.4" fill="#000000" font-weight="normal" textLength="9.3" lengthAdjust="spacingAndGlyphs">x</text>
<text x="724.1" y="467.0" font-size="19.4" fill="#000000" font-weight="normal" textLength="28.5" lengthAdjust="spacingAndGlyphs">byl</text>
<text x="861.3" y="467.0" font-size="19.4" fill="#000000" font-weight="normal" textLength="9.3" lengthAdjust="spacingAndGlyphs">x</text>
<text x="997.3" y="467.0" font-size="19.4" fill="#000000" font-weight="normal" textLength="9.3" lengthAdjust="spacingAndGlyphs">x</text>
<text x="861.3" y="495.0" font-size="19.4" fill="#000000" font-weight="normal" textLength="9.3" lengthAdjust="spacingAndGlyphs">x</text>
<text x="588.7" y="523.0" font-size="19.4" fill="#000000" font-weight="normal" textLength="35.4" lengthAdjust="spacingAndGlyphs">ano</text>
<text x="861.3" y="523.0" font-size="19.4" fill="#000000" font-weight="normal" textLength="9.3" lengthAdjust="spacingAndGlyphs">x</text>
<text x="997.3" y="523.0" font-size="19.4" fill="#000000" font-weight="normal" textLength="9.3" lengthAdjust="spacingAndGlyphs">x</text>
<text x="861.3" y="551.0" font-size="19.4" fill="#000000" font-weight="normal" textLength="9.3" lengthAdjust="spacingAndGlyphs">x</text>
<rect x="41" y="221" width="1" height="1" fill="#222"/>
<rect x="2" y="249" width="1" height="1" fill="#222"/>
<rect x="450" y="334" width="135" height="1" fill="#ffffff"/>
<rect x="448" y="332" width="139" height="1" fill="#1e6e3e"/>
<rect x="448" y="332" width="1" height="31" fill="#1e6e3e"/>
<rect x="585" y="334" width="2" height="23" fill="#1e6e3e"/>
<rect x="450" y="361" width="131" height="2" fill="#1e6e3e"/>
<rect x="582" y="358" width="6" height="6" fill="#1e6e3e"/>
</svg>
</body></html>
